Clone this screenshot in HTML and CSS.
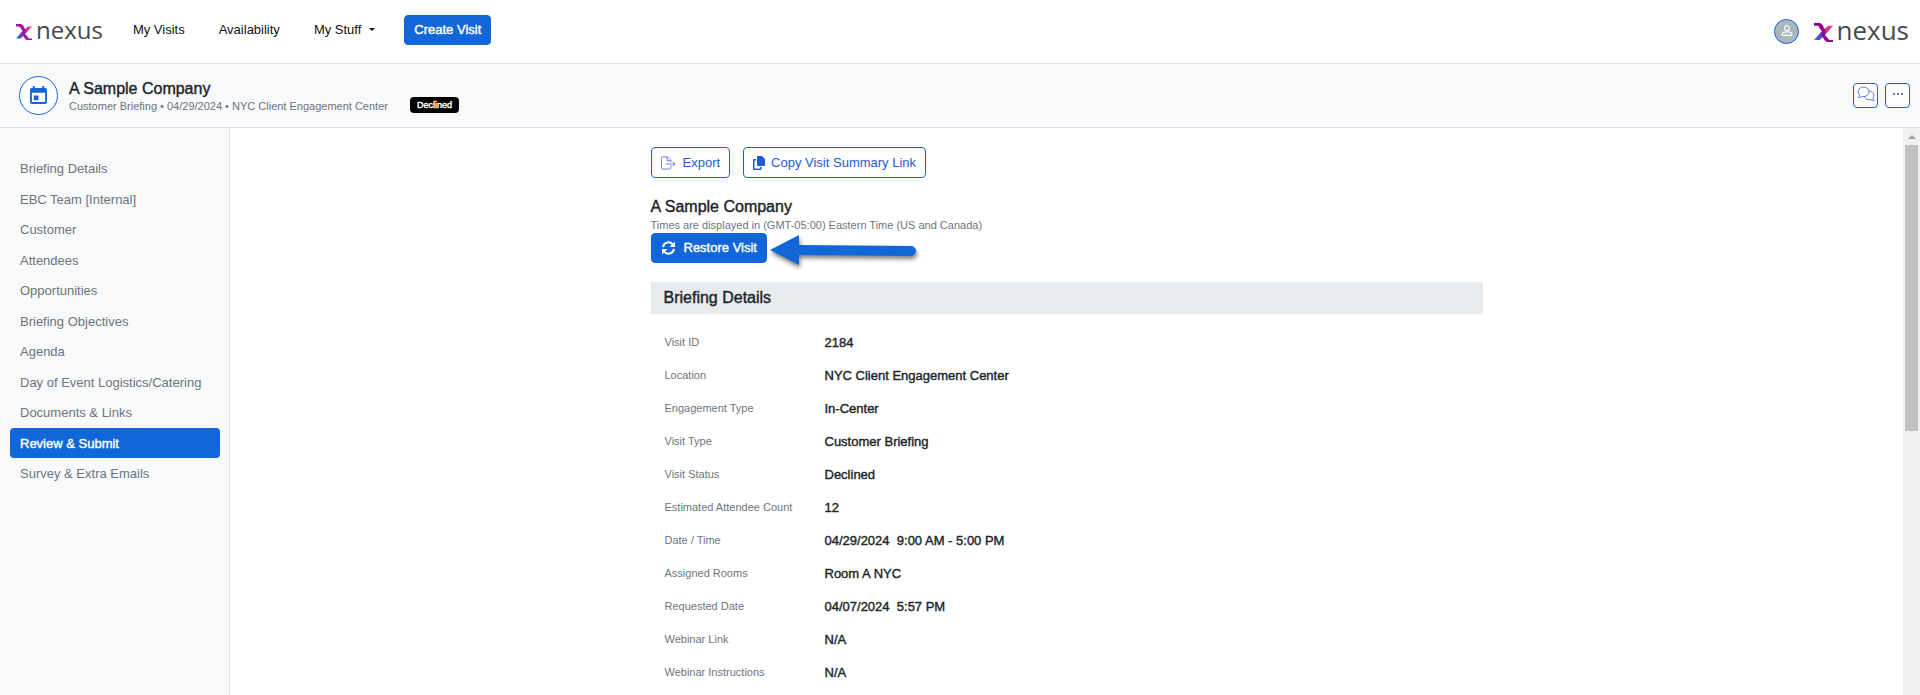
FILE: index.html
```html
<!DOCTYPE html>
<html lang="en">
<head>
    <meta charset="UTF-8">
    <meta name="viewport" content="width=device-width, initial-scale=1.0">
    <title>A Sample Company - Review &amp; Submit</title>
    <link rel="stylesheet" href="styles.css">
</head>
<body>
    <!-- top navigation -->
    <header class="topbar">
        <a href="#" class="logo">
            <svg class="logo-mark" viewBox="0 0 20 20" aria-hidden="true">
                <defs>
                    <linearGradient id="markA" x1="0" y1="1" x2="1" y2="0">
                        <stop offset="0" stop-color="#3b6bea"/>
                        <stop offset=".5" stop-color="#6a2fb8"/>
                        <stop offset=".6" stop-color="#c8288a"/>
                        <stop offset="1" stop-color="#f0436a"/>
                    </linearGradient>
                </defs>
                <path fill="url(#markA)" d="M15 3h5l-8 9-6 6H0l7-8z"/>
                <path fill="#a0129b" d="M0 0h6c1 0 2 1 3 2l3 6-1 4 5 6h4v2h-6c-1 0-2-1-3-2l-3-5 1-3-4-6-1-1H0z"/>
            </svg>
            <span>nexus</span>
        </a>
        <nav class="menu">
            <a href="#">My Visits</a>
            <a href="#">Availability</a>
            <a href="#" class="has-sub">My Stuff</a>
        </nav>
        <button type="button" class="btn btn-primary">Create Visit</button>
        <div class="topbar-right">
            <button type="button" class="avatar" aria-label="Account">
                <svg viewBox="0 0 16 16" aria-hidden="true"><circle cx="8" cy="5" r="3.2"/><path d="M2.500 14.500c-.6 0-1-.4-1-1 0-2 2-3.500 4-3.500h5c2 0 4 1.500 4 3.500 0 .6-.4 1-1 1z"/></svg>
            </button>
            <a href="#" class="logo logo-lg">
                <svg class="logo-mark" viewBox="0 0 20 20" aria-hidden="true">
                    <path fill="url(#markA)" d="M15 3h5l-8 9-6 6H0l7-8z"/>
                    <path fill="#97008f" d="M0 0h6c1 0 2 1 3 2l3 6-1 4 5 6h4v2h-6c-1 0-2-1-3-2l-3-5 1-3-4-6-1-1H0z"/>
                </svg>
                <span>nexus</span>
            </a>
        </div>
    </header>

    <!-- visit header -->
    <section class="visitbar">
        <div class="visit-icon">
            <svg viewBox="0 0 18 20" aria-hidden="true"><path fill-rule="evenodd" d="M3 0h2v2h8V0h2v2h1a2 2 0 0 1 2 2v13a2 2 0 0 1-2 2H2a2 2 0 0 1-2-2V4a2 2 0 0 1 2-2h1zM2 7v10h14V7z"/><path d="M4 10h5v5H4z"/></svg>
        </div>
        <div class="visit-info">
            <h1>A Sample Company</h1>
            <p>Customer Briefing • 04/29/2024 • NYC Client Engagement Center</p>
        </div>
        <span class="badge">Declined</span>
        <div class="visit-actions">
            <button type="button" class="icon-btn" aria-label="Messages">
                <svg viewBox="0 0 18 16" aria-hidden="true"><path d="M2.500 9A5.500 4.800 0 1 1 5.500 10.500c-1.500.2-2.500 1.200-4.500 1 .8-.8 1.500-1.500 1.500-2.500z"/><path d="M12 5c2.800 0 5 2 5 4.500 0 1-.4 2-1 2.700 0 1 .6 1.500 1 2.300-1.500 0-2.500-.5-3-1-3 .8-5.500-.3-6.500-2.500"/></svg>
            </button>
            <button type="button" class="icon-btn" aria-label="More">
                <svg viewBox="0 0 18 16" aria-hidden="true"><path class="dots" d="M4 7h2v2H4zM8 7h2v2H8zM12 7h2v2h-2z"/></svg>
            </button>
        </div>
    </section>

    <div class="page">
        <nav class="sidebar">
            <a href="#">Briefing Details</a>
            <a href="#">EBC Team [Internal]</a>
            <a href="#">Customer</a>
            <a href="#">Attendees</a>
            <a href="#">Opportunities</a>
            <a href="#">Briefing Objectives</a>
            <a href="#">Agenda</a>
            <a href="#">Day of Event Logistics/Catering</a>
            <a href="#">Documents &amp; Links</a>
            <a href="#" class="on">Review &amp; Submit</a>
            <a href="#">Survey &amp; Extra Emails</a>
        </nav>

        <main class="content">
            <div class="summary">
                <div class="tools">
                    <button type="button" class="btn btn-line">
                        <svg class="thin" viewBox="0 0 16 14" aria-hidden="true"><path d="M10.500 9.500V12a1.500 1.500 0 0 1-1.500 1.500H2A1.500 1.500 0 0 1 .5 12V2A1.500 1.500 0 0 1 2 .5h5l3.500 3.500v2M6.500.5V4.500h4M5.500 8h9.500M12.500 5.500L15 8l-2.500 2.500"/></svg>
                        Export
                    </button>
                    <button type="button" class="btn btn-line btn-copy">
                        <svg viewBox="0 0 12 14" aria-hidden="true"><path d="M5 0h4l3 3v6a1 1 0 0 1-1 1H5a1 1 0 0 1-1-1V1a1 1 0 0 1 1-1z"/><path d="M1 3h2v1.500H1.500v8H7V11h1.500v2a1 1 0 0 1-1 1H1a1 1 0 0 1-1-1V4a1 1 0 0 1 1-1z"/></svg>
                        Copy Visit Summary Link
                    </button>
                </div>

                <h2>A Sample Company</h2>
                <p class="note">Times are displayed in (GMT-05:00) Eastern Time (US and Canada)</p>
                <div class="restore">
                    <button type="button" class="btn btn-primary btn-restore">
                        <svg viewBox="0 0 14 14" aria-hidden="true"><path d="M1.500 6A5.500 5.500 0 0 1 11 3.200M12.500 8A5.500 5.500 0 0 1 3 10.800"/><path class="head" d="M13.500.5v5.500H8zM.5 13.500V8H6z"/></svg>
                        Restore Visit
                    </button>
                    <svg class="arrow" viewBox="0 0 156 44" aria-hidden="true"><path d="M4 17L33 2v10l112 1a5 5 0 0 1 0 10l-112-1v10z"/></svg>
                </div>

                <h3>Briefing Details</h3>
                <dl class="details">
                    <dt>Visit ID</dt><dd>2184</dd>
                    <dt>Location</dt><dd>NYC Client Engagement Center</dd>
                    <dt>Engagement Type</dt><dd>In-Center</dd>
                    <dt>Visit Type</dt><dd>Customer Briefing</dd>
                    <dt>Visit Status</dt><dd>Declined</dd>
                    <dt>Estimated Attendee Count</dt><dd>12</dd>
                    <dt>Date / Time</dt><dd>04/29/2024&nbsp; 9:00 AM - 5:00 PM</dd>
                    <dt>Assigned Rooms</dt><dd>Room A NYC</dd>
                    <dt>Requested Date</dt><dd>04/07/2024&nbsp; 5:57 PM</dd>
                    <dt>Webinar Link</dt><dd>N/A</dd>
                    <dt>Webinar Instructions</dt><dd>N/A</dd>
                </dl>
            </div>
        </main>

        <!-- scroll track -->
        <div class="track" aria-hidden="true">
            <span class="track-up"></span>
            <span class="track-thumb"></span>
        </div>
    </div>
</body>
</html>
```
FILE: styles.css
```css
/* reset */
*{
    box-sizing: border-box;
}
body, h1, h2, h3, p, dl, dd{
    margin: 0;
}
body{
    display: flex;
    flex-direction: column;
    height: 100vh;
    overflow: hidden;
    background: #fff;
    color: #212529;
    font-family: "Liberation Sans", Arial, sans-serif;
    font-size: 13px;
    line-height: 1.5;
}
a{
    color: inherit;
    text-decoration: none;
}
h1, h2, h3{
    font-size: 16px;
    font-weight: 400;
    line-height: 20px;
}
/* medium weight */
h1, h2, h3, dd, .btn-primary, .on, .badge{
    -webkit-text-stroke: 0.4px currentColor;
}

/* buttons */
.btn{
    display: flex;
    align-items: center;
    height: 30px;
    padding: 0 9px;
    border: 1px solid #1267d8;
    border-radius: 4px;
    font: inherit;
}
.btn-primary{
    background: #1267d8;
    color: #fff;
}
.btn-line{
    height: 31px;
    gap: 7px;
    background: #fff;
    color: #1f5bd8;
}
.btn svg{
    width: 15px;
    height: 14px;
    fill: currentColor;
}
.btn .thin{
    fill: none;
    stroke: #6a78dc;
}
.btn-copy{
    gap: 6px;
}
.btn-copy svg{
    width: 12px;
}

/* top navigation */
.topbar{
    display: flex;
    flex: none;
    height: 64px;
    padding: 0 11px 0 16px;
    border-bottom: 1px solid #dee2e6;
}
.logo{
    display: flex;
    align-items: center;
    height: 60px;
    gap: 4px;
    color: #48494c;
    font-family: "Open Sans", sans-serif;
    font-size: 24px;
}
.logo-mark{
    width: 16px;
    height: 18px;
    margin-top: 4px;
}
.logo-lg{
    font-size: 26px;
}
.logo-lg .logo-mark{
    width: 19px;
    height: 19px;
}
.menu{
    display: flex;
    gap: 34px;
    margin-left: 30px;
    padding-top: 20px;
    color: #111;
}
.has-sub::after{
    content: '';
    display: inline-block;
    margin-left: 8px;
    vertical-align: 3px;
    border: 3px solid transparent;
    border-top-color: #111;
    border-bottom: 0;
}
.topbar .btn{
    margin: 15px 0 0 29px;
}
.topbar-right{
    display: flex;
    gap: 15px;
    margin-left: auto;
}
.avatar{
    display: flex;
    align-items: center;
    justify-content: center;
    width: 25px;
    height: 25px;
    margin-top: 19px;
    padding: 0 0 3px 2px;
    border: 1px solid #1267d8;
    border-radius: 50%;
    background: #adb5bd;
}
.avatar svg{
    width: 12px;
    height: 13px;
    flex: none;
    fill: none;
    stroke: #fff;
    stroke-width: 1.4;
}

/* visit header */
.visitbar{
    display: flex;
    flex: none;
    align-items: center;
    height: 64px;
    padding: 0 10px 0 19px;
    border-bottom: 1px solid #dee2e6;
    background: #f8f9fb;
}
.visit-icon{
    display: flex;
    align-items: center;
    justify-content: center;
    width: 39px;
    height: 39px;
    border: 1px solid #1267d8;
    border-radius: 50%;
    background: #fff;
}
.visit-icon svg{
    width: 17px;
    height: 19px;
    fill: #1267d8;
}
.visit-info{
    margin-left: 11px;
}
.visit-info p, .note{
    color: #6c757d;
    font-size: 11px;
    line-height: 16px;
}
.visit-info p{
    line-height: 14px;
}
.badge{
    align-self: flex-end;
    margin: 0 0 14px 22px;
    padding: 0 7px;
    border-radius: 4px;
    background: #000;
    color: #fff;
    font-size: 9px;
    line-height: 16px;
}
.visit-actions{
    display: flex;
    gap: 7px;
    margin-left: auto;
}
.icon-btn{
    display: flex;
    align-items: center;
    justify-content: center;
    width: 25px;
    height: 25px;
    padding: 0 0 3px;
    border: 1px solid #1267d8;
    border-radius: 4px;
    background: #fff;
}
.icon-btn svg{
    flex: none;
    width: 18px;
    height: 16px;
    fill: none;
    stroke: #5c7bde;
}
.icon-btn .dots{
    fill: #5c7bde;
    stroke: none;
}

/* page */
.page{
    display: flex;
    flex: 1;
    min-height: 0;
}
.sidebar{
    flex: none;
    width: 230px;
    padding: 25px 9px 0 10px;
    border-right: 1px solid #dee2e6;
    background: #f8f9fb;
    color: #6c757d;
}
.sidebar a{
    display: block;
    padding: 6px 10px 5px;
    border-radius: 4px;
}
.sidebar .on{
    background: #1267d8;
    color: #fff;
}
.content{
    flex: 1;
    overflow: hidden;
}
.summary{
    max-width: 832px;
    margin: 0 auto;
    padding-top: 19px;
}
.tools{
    display: flex;
    gap: 13px;
    margin-bottom: 19px;
}
.restore{
    display: flex;
    position: relative;
    margin-bottom: 19px;
}
.btn-restore{
    gap: 8px;
}
.btn-restore svg{
    fill: none;
    stroke: #fff;
    stroke-width: 2;
}
.btn-restore .head{
    fill: #fff;
    stroke: none;
}
/* pointer laid over the page */
.arrow{
    position: absolute;
    top: 0;
    left: 115px;
    width: 156px;
    height: 44px;
    overflow: visible;
    fill: #1267d8;
    filter: drop-shadow(1px 3px 2px rgba(0, 0, 0, .5));
}
h3{
    padding: 6px 13px;
    background: #e7ebee;
}

/* label / value list */
.details{
    display: grid;
    grid-template-columns: 160px 1fr;
    grid-auto-rows: 33px;
    padding: 12px 14px;
}
.details dt{
    color: #6c757d;
    font-size: 11px;
    line-height: 32px;
}
.details dd{
    line-height: 34px;
}

/* scroll track */
.track{
    display: flex;
    flex: none;
    flex-direction: column;
    align-items: center;
    width: 17px;
    padding-top: 7px;
    background: #f1f1f1;
}
.track-up{
    border: 4px solid transparent;
    border-top: 0;
    border-bottom-color: #a3a3a3;
    margin-bottom: 6px;
}
.track-thumb{
    width: 13px;
    height: 51%;
    background: #c1c1c1;
}
```
